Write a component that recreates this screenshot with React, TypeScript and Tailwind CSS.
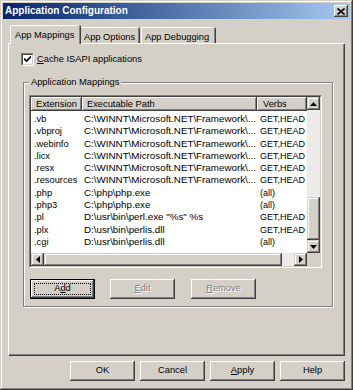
import React from "react";

const raised =
  "bg-[#d4d0c8] shadow-[inset_-1px_-1px_#404040,inset_1px_1px_#fff,inset_-2px_-2px_#808080]";
const raisedSb =
  "bg-[#d4d0c8] shadow-[inset_-1px_-1px_#404040,inset_1px_1px_#d4d0c8,inset_-2px_-2px_#808080,inset_2px_2px_#fff]";

const NET = "C:\\WINNT\\Microsoft.NET\\Framework\\...";

const rows = [
  [".vb", NET, "GET,HEAD"],
  [".vbproj", NET, "GET,HEAD"],
  [".webinfo", NET, "GET,HEAD"],
  [".licx", NET, "GET,HEAD"],
  [".resx", NET, "GET,HEAD"],
  [".resources", NET, "GET,HEAD"],
  [".php", "C:\\php\\php.exe", "(all)"],
  [".php3", "C:\\php\\php.exe", "(all)"],
  [".pl", 'D:\\usr\\bin\\perl.exe "%s" %s', "GET,HEAD"],
  [".plx", "D:\\usr\\bin\\perlis.dll", "GET,HEAD"],
  [".cgi", "D:\\usr\\bin\\perlis.dll", "(all)"],
];

const Arrow: React.FC<{ dir: "up" | "down" | "left" | "right" }> = ({ dir }) => {
  const pts = {
    up: "3.5,0 7,4 0,4",
    down: "0,0 7,0 3.5,4",
    left: "4,0 4,7 0,3.5",
    right: "0,0 0,7 4,3.5",
  }[dir];
  const vertical = dir === "up" || dir === "down";
  return (
    <svg width={vertical ? 7 : 4} height={vertical ? 4 : 7} viewBox={vertical ? "0 0 7 4" : "0 0 4 7"}>
      <polygon points={pts} fill="#000" />
    </svg>
  );
};

const PushButton: React.FC<{ children: React.ReactNode; disabled?: boolean; def?: boolean; className?: string }> = ({
  children,
  disabled,
  def,
  className = "",
}) => {
  if (def) {
    return (
      <div className={`w-[65px] h-[20px] border border-black ${className}`}>
        <div className={`w-full h-full ${raised} p-[3px]`}>
          <div className="w-full h-full border border-dotted border-black flex items-center justify-center text-black">
            {children}
          </div>
        </div>
      </div>
    );
  }
  return (
    <div
      className={`w-[65px] h-[20px] ${raised} flex items-center justify-center ${
        disabled ? "text-[#808080] [text-shadow:1px_1px_#fff]" : "text-black"
      } ${className}`}
    >
      {children}
    </div>
  );
};

export default function App() {
  return (
    <div className="w-[353px] h-[390px] bg-[#d4d0c8] p-[3px] flex flex-col whitespace-nowrap font-['Liberation_Sans',Arial,sans-serif] text-[9.3px] text-black shadow-[inset_-1px_-1px_#404040,inset_1px_1px_#d4d0c8,inset_-2px_-2px_#808080,inset_2px_2px_#fff] select-none">
      {/* title bar */}
      <div className="h-[16px] bg-gradient-to-r from-[#0a246a] to-[#a6caf0] flex items-center justify-between pl-[2px] pr-[2px]">
        <span className="text-white font-bold text-[10px] leading-none">Application Configuration</span>
        <div className={`w-[14px] h-[12px] ${raised} flex items-center justify-center`}>
          <svg width="8" height="7" viewBox="0 0 8 7">
            <path d="M0.5 0.5 L7.5 6.5 M7.5 0.5 L0.5 6.5" stroke="#000" strokeWidth="1.6" />
          </svg>
        </div>
      </div>

      {/* tabs */}
      <div className="flex items-end h-[18px] mt-[6px] pl-[7px]">
        <div className="relative z-10 w-[70px] h-[19px] -mb-px bg-[#d4d0c8] border-l border-t border-white rounded-tl-[2px] rounded-tr-[2px] shadow-[inset_-1px_0_#808080,1px_0_#404040] flex items-start pt-[3px] pl-[4px]">
          App Mappings
        </div>
        <div className="w-[59px] h-[16px] border-t border-white rounded-tr-[2px] shadow-[inset_-1px_0_#808080,1px_0_#404040] flex items-start pt-[3px] pl-[4px]">
          App Options
        </div>
        <div className="w-[74px] h-[16px] ml-[2px] border-l border-t border-white rounded-tl-[2px] rounded-tr-[2px] shadow-[inset_-1px_0_#808080,1px_0_#404040] flex items-start pt-[3px] pl-[3px]">
          App Debugging
        </div>
      </div>

      {/* tab panel */}
      <div className="ml-[5px] w-[336px] h-[312px] border-l border-t border-white shadow-[inset_-1px_-1px_#808080,1px_1px_#404040] pt-[9px] pl-[12px]">
        <div className="flex items-center h-[13px]">
          <div className="w-[13px] h-[13px] border border-t-[#808080] border-l-[#808080] border-r-white border-b-white">
            <div className="w-full h-full bg-white border border-t-[#404040] border-l-[#404040] border-r-[#d4d0c8] border-b-[#d4d0c8] flex items-center justify-center">
              <svg width="7" height="7" viewBox="0 0 7 7">
                <path d="M0 2.5 L2.5 5 L7 0.5" stroke="#000" strokeWidth="1.6" fill="none" />
              </svg>
            </div>
          </div>
          <span className="ml-[3px]">
            <u>C</u>ache ISAPI applications
          </span>
        </div>

        {/* group box */}
        <div className="relative mt-[16px] ml-[2px] w-[310px] h-[225px] border border-[#808080] shadow-[1px_1px_#fff,inset_1px_1px_#fff] pl-[5px] pt-[12px]">
          <span className="absolute -top-[7px] left-[5px] px-[2px] bg-[#d4d0c8] leading-[12px]">
            Application Mappings
          </span>

          {/* list view */}
          <div className="w-[293px] h-[173px] border border-t-[#808080] border-l-[#808080] border-r-white border-b-white">
            <div className="w-full h-full bg-white border border-t-[#404040] border-l-[#404040] border-r-[#d4d0c8] border-b-[#d4d0c8] flex flex-col">
              <div className="flex flex-1 min-h-0">
                <div className="flex-1 min-w-0 flex flex-col overflow-hidden">
                  <div className="flex h-[14px] shrink-0">
                    <div className={`w-[51px] ${raised} pl-[5px] leading-[14px]`}>Extension</div>
                    <div className={`w-[175px] ${raised} pl-[5px] leading-[14px]`}>Executable Path</div>
                    <div className={`flex-1 ${raised} pl-[6px] leading-[14px]`}>Verbs</div>
                  </div>
                  <div className="pt-[2px]">
                    {rows.map((r) => (
                      <div key={r[0]} className="flex h-[12.3px] leading-[12.3px]">
                        <div className="w-[51px] pl-[3px] overflow-hidden">{r[0]}</div>
                        <div className="w-[175px] pl-[2px] overflow-hidden text-[9.8px]">{r[1]}</div>
                        <div className="flex-1 pl-[3px] overflow-hidden text-[9px]">{r[2]}</div>
                      </div>
                    ))}
                  </div>
                </div>
                {/* vertical scrollbar */}
                <div className="w-[13px] flex flex-col">
                  <div className={`h-[13px] ${raisedSb} flex items-center justify-center`}>
                    <Arrow dir="up" />
                  </div>
                  <div className="h-[87px] bg-[#ecebe8]" />
                  <div className={`h-[43px] ${raisedSb}`} />
                  <div className="flex-1 bg-[#ecebe8]" />
                  <div className={`h-[13px] ${raisedSb} flex items-center justify-center`}>
                    <Arrow dir="down" />
                  </div>
                </div>
              </div>
              {/* horizontal scrollbar */}
              <div className="flex h-[13px] shrink-0">
                <div className={`w-[13px] ${raisedSb} flex items-center justify-center`}>
                  <Arrow dir="left" />
                </div>
                <div className={`w-[238px] ${raisedSb}`} />
                <div className="flex-1 bg-[#ecebe8]" />
                <div className={`w-[13px] ${raisedSb} flex items-center justify-center`}>
                  <Arrow dir="right" />
                </div>
                <div className="w-[13px] bg-[#d4d0c8]" />
              </div>
            </div>
          </div>

          <div className="flex gap-[15px] mt-[11px] ml-px">
            <PushButton def>
              <span>
                A<u>d</u>d
              </span>
            </PushButton>
            <PushButton disabled>
              <span>
                <u>E</u>dit
              </span>
            </PushButton>
            <PushButton disabled className="ml-px">
              <span>
                <u>R</u>emove
              </span>
            </PushButton>
          </div>
        </div>
      </div>

      {/* dialog buttons */}
      <div className="flex justify-end gap-[5px] mt-[6px] pr-[5px]">
        <PushButton>OK</PushButton>
        <PushButton>Cancel</PushButton>
        <PushButton>
          <span>
            <u>A</u>pply
          </span>
        </PushButton>
        <PushButton>Help</PushButton>
      </div>
    </div>
  );
}
